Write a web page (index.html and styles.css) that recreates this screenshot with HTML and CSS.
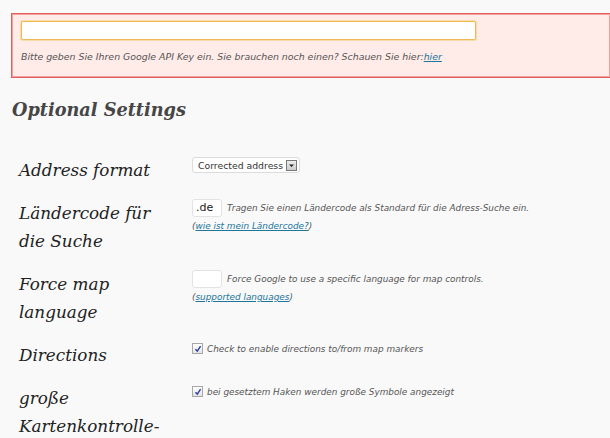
FILE: index.html
```html
<!DOCTYPE html>
<html>
<head>
<meta charset="utf-8">
<link rel="stylesheet" href="styles.css">
</head>
<body>
<div class="error-box">
  <input class="api-input" type="text">
  <p class="error-text">Bitte geben Sie Ihren Google API Key ein. Sie brauchen noch einen? Schauen Sie hier:<a href="#">hier</a></p>
</div>
<h3 class="section-title">Optional Settings</h3>
<div class="form-table">
  <div class="label">Address format</div>
  <div class="field">
    <div class="select"><span class="select-text">Corrected address</span><span class="select-btn"><svg width="7" height="5" viewBox="0 0 7 5"><path d="M1 1.5h5L3.5 4z" fill="#222"/></svg></span></div>
  </div>

  <div class="label">Ländercode für die Suche</div>
  <div class="field">
    <div class="inline"><span class="small-input">.de</span><span class="desc">Tragen Sie einen Ländercode als Standard für die Adress-Suche ein.</span></div>
    <div class="desc link-line">(<a href="#">wie ist mein Ländercode?</a>)</div>
  </div>

  <div class="label">Force map language</div>
  <div class="field">
    <div class="inline"><span class="small-input"></span><span class="desc">Force Google to use a specific language for map controls.</span></div>
    <div class="desc link-line">(<a href="#">supported languages</a>)</div>
  </div>

  <div class="label">Directions</div>
  <div class="field">
    <div class="inline check-row"><span class="checkbox"><svg width="8" height="8" viewBox="0 0 8 8"><path d="M1.5 4.2L3.3 6.2L6.6 1.2" fill="none" stroke="#2a3d99" stroke-width="1.4"/></svg></span><span class="desc">Check to enable directions to/from map markers</span></div>
  </div>

  <div class="label">große Kartenkontrolle-</div>
  <div class="field">
    <div class="inline check-row"><span class="checkbox"><svg width="8" height="8" viewBox="0 0 8 8"><path d="M1.5 4.2L3.3 6.2L6.6 1.2" fill="none" stroke="#2a3d99" stroke-width="1.4"/></svg></span><span class="desc">bei gesetztem Haken werden große Symbole angezeigt</span></div>
  </div>
</div>
</body>
</html>
```
FILE: styles.css
```css
html, body {
  margin: 0;
  padding: 0;
  background: #f9f9f9;
  font-family: "DejaVu Sans", Verdana, sans-serif;
  overflow: hidden;
}
body {
  padding: 13px 0 0 11px;
}
.error-box {
  background: #ffebe8;
  border: 1px solid #e06060;
  border-right: none;
  box-shadow: inset 0 0 0 1px #f2a0a0;
  padding: 7px 0 0 9px;
  height: 65px;
  box-sizing: border-box;
}
.api-input {
  display: block;
  width: 455px;
  height: 19px;
  box-sizing: border-box;
  margin: 0;
  border: 1px solid #f0b858;
  box-shadow: 0 0 0 1px #f8dcaa;
  background: #fff;
  border-radius: 2px;
  padding: 0;
}
.error-text {
  margin: 11px 0 0 0;
  font-size: 9.4px;
  font-style: italic;
  color: #555;
}
a {
  color: #21759b;
}
.section-title {
  margin: 18px 0 0 1px;
  font-family: "DejaVu Serif", Georgia, serif;
  font-style: italic;
  font-weight: bold;
  font-size: 17.7px;
  color: #464646;
  line-height: 28px;
}
.form-table {
  display: grid;
  grid-template-columns: 181px 1fr;
  row-gap: 15px;
  margin-top: 32px;
}
.label {
  padding-left: 8px;
  font-family: "DejaVu Serif", Georgia, serif;
  font-style: italic;
  font-size: 16.8px;
  line-height: 28px;
  color: #222;
  width: 150px;
}
.select {
  display: flex;
  align-items: center;
  width: 108px;
  height: 16px;
  box-sizing: border-box;
  background: #fff;
  border: 1px solid #dcdcdc;
  border-radius: 3px;
  padding-left: 5px;
  margin-top: 1px;
}
.select-text {
  font-size: 9.3px;
  color: #333;
  flex: 1;
  white-space: nowrap;
}
.select-btn {
  width: 11px;
  height: 11px;
  box-sizing: border-box;
  border: 1px solid #777;
  background: linear-gradient(#eee, #ccc);
  display: flex;
  align-items: center;
  justify-content: center;
  margin-right: 2px;
}
.inline {
  display: flex;
  align-items: center;
}
.small-input {
  display: inline-block;
  width: 30px;
  height: 18px;
  box-sizing: border-box;
  background: #fff;
  border: 1px solid #e3e3e3;
  border-radius: 3px;
  font-size: 11px;
  line-height: 16px;
  padding-left: 3px;
  color: #222;
  margin-right: 5px;
}
.desc {
  font-size: 8.9px;
  font-style: italic;
  color: #555;
  white-space: nowrap;
}
.link-line {
  margin-top: 4px;
}
.check-row {
  margin-top: 2px;
}
.checkbox {
  width: 11px;
  height: 11px;
  box-sizing: border-box;
  border: 1px solid #a8a8a8;
  background: linear-gradient(#fff, #e4e4e4);
  display: inline-flex;
  align-items: center;
  justify-content: center;
  margin-right: 4px;
}
```
